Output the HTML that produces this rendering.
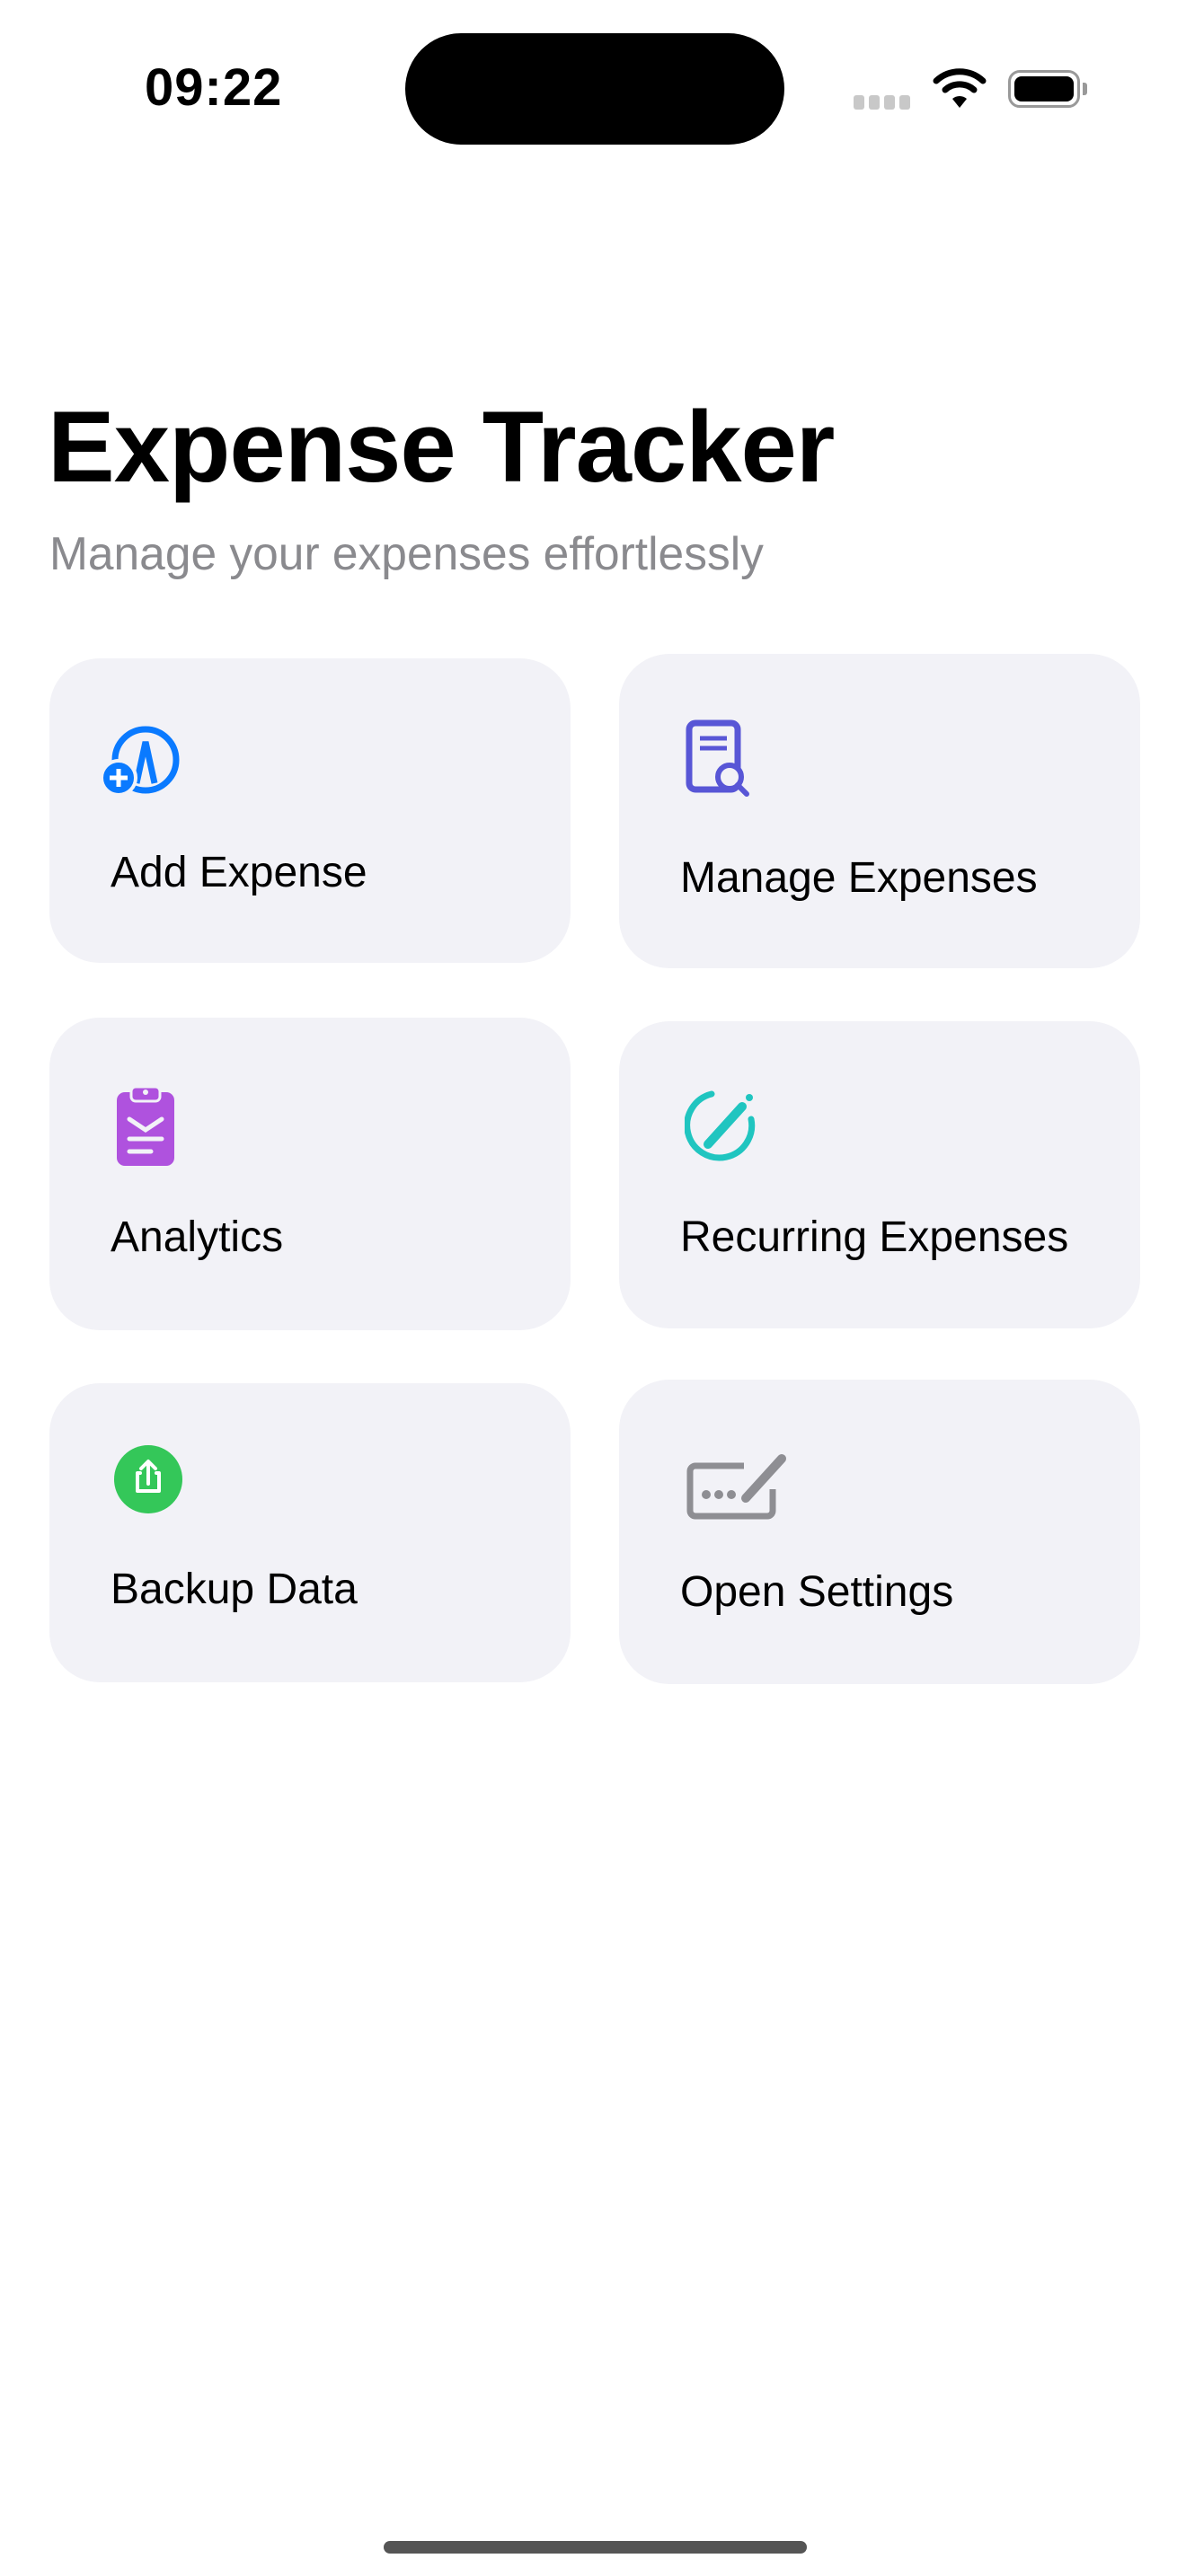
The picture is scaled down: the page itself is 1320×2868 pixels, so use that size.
<!DOCTYPE html>
<html><head><meta charset="utf-8"><style>
*{margin:0;padding:0;box-sizing:border-box}
body{width:1320px;height:2868px;background:#fff;position:relative;overflow:hidden;font-family:"Liberation Sans",sans-serif}
.abs{position:absolute}
.card{position:absolute;background:#f2f2f7;border-radius:56px}
.lbl{position:absolute;font-size:48px;color:#000;white-space:nowrap}
</style></head><body>
<div class="abs" style="left:161px;top:64px;font-size:58px;font-weight:bold;letter-spacing:1px">09:22</div>
<div class="abs" style="left:451px;top:37px;width:422px;height:124px;background:#000;border-radius:62px"></div>
<div class="abs" style="left:950px;top:106px;width:12px;height:16px;background:#c8c8c8;border-radius:3px"></div>
<div class="abs" style="left:967px;top:106px;width:12px;height:16px;background:#c8c8c8;border-radius:3px"></div>
<div class="abs" style="left:984px;top:106px;width:12px;height:16px;background:#c8c8c8;border-radius:3px"></div>
<div class="abs" style="left:1001px;top:106px;width:12px;height:16px;background:#c8c8c8;border-radius:3px"></div>
<svg class="abs" style="left:1038px;top:74px" width="60" height="48" viewBox="0 0 60 48"><path d="M4 16 A38 38 0 0 1 56 16" stroke="#000" stroke-width="7" fill="none" stroke-linecap="round"/><path d="M14 26 A24 24 0 0 1 46 26" stroke="#000" stroke-width="7" fill="none" stroke-linecap="round"/><path d="M22 36 L30 46 L38 36 A12 12 0 0 0 22 36Z" fill="#000"/></svg>
<div class="abs" style="left:1122px;top:78px;width:80px;height:42px;border:3px solid #999;border-radius:13px;padding:4px"><div style="width:100%;height:100%;background:#000;border-radius:8px"></div></div>
<div class="abs" style="left:1205px;top:92px;width:5px;height:14px;background:#999;border-radius:0 3px 3px 0"></div>

<div class="abs" style="left:53px;top:433px;font-size:112px;font-weight:bold;letter-spacing:-1px">Expense Tracker</div>
<div class="abs" style="left:55px;top:586px;font-size:51.5px;color:#8a8a8e">Manage your expenses effortlessly</div>

<div class="card" style="left:55px;top:733px;width:580px;height:339px"></div>
<div class="card" style="left:689px;top:728px;width:580px;height:350px"></div>
<div class="card" style="left:55px;top:1133px;width:580px;height:348px"></div>
<div class="card" style="left:689px;top:1137px;width:580px;height:342px"></div>
<div class="card" style="left:55px;top:1540px;width:580px;height:333px"></div>
<div class="card" style="left:689px;top:1536px;width:580px;height:339px"></div>

<svg class="abs" style="left:112px;top:804px" width="92" height="82" viewBox="0 0 92 82"><circle cx="50" cy="42" r="34" stroke="#0a7aff" stroke-width="7" fill="none"/><path d="M40 68 L50 22 L60 68" stroke="#0a7aff" stroke-width="7" fill="none"/><circle cx="20" cy="62" r="19" fill="#0a7aff" stroke="#f2f2f7" stroke-width="4"/><path d="M20 52v20M10 62h20" stroke="#fff" stroke-width="5"/></svg>
<div class="lbl" style="left:123px;top:944px">Add Expense</div>

<svg class="abs" style="left:762px;top:800px" width="76" height="90" viewBox="0 0 76 90"><rect x="5" y="5" width="54" height="74" rx="7" stroke="#5856d6" stroke-width="7" fill="none"/><path d="M17 22h30M17 33h30" stroke="#5856d6" stroke-width="5"/><circle cx="50" cy="65" r="13" fill="#f2f2f7" stroke="#5856d6" stroke-width="6"/><path d="M59 74l10 10" stroke="#5856d6" stroke-width="6" stroke-linecap="round"/></svg>
<div class="lbl" style="left:757px;top:950px">Manage Expenses</div>

<svg class="abs" style="left:128px;top:1204px" width="68" height="96" viewBox="0 0 68 96"><rect x="2" y="12" width="64" height="82" rx="9" fill="#af52de"/><rect x="18" y="6" width="32" height="16" rx="5" fill="#af52de" stroke="#f2f2f7" stroke-width="3"/><circle cx="34" cy="12" r="3" fill="#f2f2f7"/><path d="M16 42l18 12 18-12M16 64h36M16 78h24" stroke="#f2f2f7" stroke-width="5" fill="none" stroke-linecap="round"/></svg>
<div class="lbl" style="left:123px;top:1350px">Analytics</div>

<svg class="abs" style="left:762px;top:1210px" width="82" height="86" viewBox="0 0 82 86"><path d="M30 8 A36 36 0 1 0 74 36" stroke="#20c5c0" stroke-width="7" fill="none" stroke-linecap="round"/><path d="M26 64 L64 22" stroke="#20c5c0" stroke-width="10" stroke-linecap="round"/><circle cx="72" cy="12" r="4" fill="#20c5c0"/></svg>
<div class="lbl" style="left:757px;top:1350px">Recurring Expenses</div>

<svg class="abs" style="left:126px;top:1608px" width="78" height="78" viewBox="0 0 78 78"><circle cx="39" cy="39" r="38" fill="#34c759"/><path d="M30 32h-3v20h24V32h-3M39 44V20M31 27l8-8 8 8" stroke="#fff" stroke-width="4" fill="none" stroke-linecap="round" stroke-linejoin="round"/></svg>
<div class="lbl" style="left:123px;top:1742px">Backup Data</div>

<svg class="abs" style="left:762px;top:1614px" width="120" height="80" viewBox="0 0 120 80"><path d="M66 18H12a6 6 0 0 0-6 6v44a6 6 0 0 0 6 6h80a6 6 0 0 0 6-6V44" stroke="#8e8e93" stroke-width="7" fill="none"/><circle cx="24" cy="50" r="5" fill="#8e8e93"/><circle cx="38" cy="50" r="5" fill="#8e8e93"/><circle cx="52" cy="50" r="5" fill="#8e8e93"/><path d="M68 54L108 10" stroke="#8e8e93" stroke-width="10" stroke-linecap="round"/></svg>
<div class="lbl" style="left:757px;top:1745px">Open Settings</div>

<div class="abs" style="left:427px;top:2829px;width:471px;height:14px;background:#555;border-radius:7px"></div>
</body></html>
